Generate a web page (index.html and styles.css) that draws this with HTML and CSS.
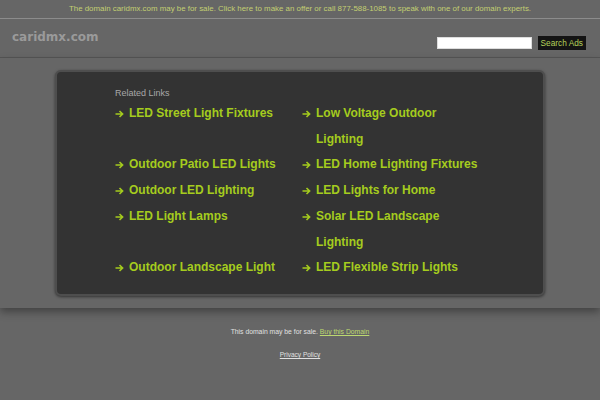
FILE: index.html
```html
<!DOCTYPE html>
<html>
<head>
<meta charset="utf-8">
<link rel="stylesheet" href="styles.css">
</head>
<body>
<div class="topbar">The domain caridmx.com may be for sale. Click here to make an offer or call 877-588-1085 to speak with one of our domain experts.</div>
<div class="header">
  <div class="logo">caridmx.com</div>
  <div class="search">
    <span class="input"></span>
    <span class="btn">Search Ads</span>
  </div>
</div>
<div class="main">
  <div class="box">
    <div class="title">Related Links</div>
    <div class="links">
      <a class="link"><svg class="arr" viewBox="0 0 9 8"><path d="M0.5 4H7.5M4.5 1L7.6 4L4.5 7" /></svg><span class="txt">LED Street Light Fixtures</span></a>
      <a class="link"><svg class="arr" viewBox="0 0 9 8"><path d="M0.5 4H7.5M4.5 1L7.6 4L4.5 7" /></svg><span class="txt">Low Voltage Outdoor Lighting</span></a>
      <a class="link"><svg class="arr" viewBox="0 0 9 8"><path d="M0.5 4H7.5M4.5 1L7.6 4L4.5 7" /></svg><span class="txt">Outdoor Patio LED Lights</span></a>
      <a class="link"><svg class="arr" viewBox="0 0 9 8"><path d="M0.5 4H7.5M4.5 1L7.6 4L4.5 7" /></svg><span class="txt">LED Home Lighting Fixtures</span></a>
      <a class="link"><svg class="arr" viewBox="0 0 9 8"><path d="M0.5 4H7.5M4.5 1L7.6 4L4.5 7" /></svg><span class="txt">Outdoor LED Lighting</span></a>
      <a class="link"><svg class="arr" viewBox="0 0 9 8"><path d="M0.5 4H7.5M4.5 1L7.6 4L4.5 7" /></svg><span class="txt">LED Lights for Home</span></a>
      <a class="link"><svg class="arr" viewBox="0 0 9 8"><path d="M0.5 4H7.5M4.5 1L7.6 4L4.5 7" /></svg><span class="txt">LED Light Lamps</span></a>
      <a class="link"><svg class="arr" viewBox="0 0 9 8"><path d="M0.5 4H7.5M4.5 1L7.6 4L4.5 7" /></svg><span class="txt">Solar LED Landscape Lighting</span></a>
      <a class="link"><svg class="arr" viewBox="0 0 9 8"><path d="M0.5 4H7.5M4.5 1L7.6 4L4.5 7" /></svg><span class="txt">Outdoor Landscape Light</span></a>
      <a class="link"><svg class="arr" viewBox="0 0 9 8"><path d="M0.5 4H7.5M4.5 1L7.6 4L4.5 7" /></svg><span class="txt">LED Flexible Strip Lights</span></a>
    </div>
  </div>
</div>
<div class="footer">
  <div class="sale">This domain may be for sale. <a class="buy">Buy this Domain</a></div>
  <div class="privacy"><a>Privacy Policy</a></div>
</div>
</body>
</html>
```

FILE: styles.css
```css
html, body {
  margin: 0;
  padding: 0;
  background: #666666;
  font-family: "Liberation Sans", Arial, sans-serif;
}
.topbar {
  height: 18px;
  line-height: 18px;
  text-align: center;
  font-size: 7.9px;
  color: #c3cf72;
  border-bottom: 1px solid #8c8c8c;
}
.header {
  height: 38px;
  display: flex;
  align-items: center;
  justify-content: space-between;
  padding: 0 14px 0 12px;
  border-bottom: 1px solid #555555;
}
.logo {
  font-family: "DejaVu Sans", Verdana, sans-serif;
  font-weight: bold;
  font-size: 12px;
  color: #9a9a9a;
  margin-top: -3px;
}
.search {
  display: flex;
  align-items: center;
  gap: 6px;
  margin-top: 10px;
}
.input {
  width: 95px;
  height: 12px;
  background: #ffffff;
  border: 1px solid #dddddd;
  box-sizing: border-box;
}
.btn {
  background: #141414;
  color: #b4d25a;
  font-size: 8.3px;
  height: 14px;
  line-height: 14px;
  padding: 0 3px;
}
.main {
  padding: 12px 0 12px 55px;
  box-shadow: 0 4px 8px rgba(0, 0, 0, 0.35);
  position: relative;
}
.box {
  width: 490px;
  height: 226px;
  box-sizing: border-box;
  background: #333333;
  border: 2px solid #4e4e4e;
  border-radius: 6px;
  box-shadow: 0 1px 3px rgba(0, 0, 0, 0.5);
  padding: 16px 0 0 58px;
}
.title {
  font-size: 9px;
  color: #a8a8a8;
  line-height: 11px;
}
.links {
  display: grid;
  grid-template-columns: 187px 185px;
  margin-top: 2px;
}
.link {
  display: flex;
  align-items: flex-start;
  font-size: 12px;
  font-weight: bold;
  color: #a5cc1e;
  line-height: 25.7px;
}
.arr {
  width: 9px;
  height: 8px;
  flex: none;
  margin: 9px 5px 0 0;
  fill: none;
  stroke: #a5cc1e;
  stroke-width: 1.6;
}
.txt {
  flex: 1;
}
.footer {
  text-align: center;
  font-size: 6.8px;
  color: #e0e0e0;
  padding-top: 19px;
}
.sale {
  line-height: 10px;
}
.buy {
  color: #bcd870;
  text-decoration: underline;
}
.privacy {
  margin-top: 13px;
  font-size: 6.5px;
  line-height: 10px;
}
.privacy a {
  text-decoration: underline;
}
```
